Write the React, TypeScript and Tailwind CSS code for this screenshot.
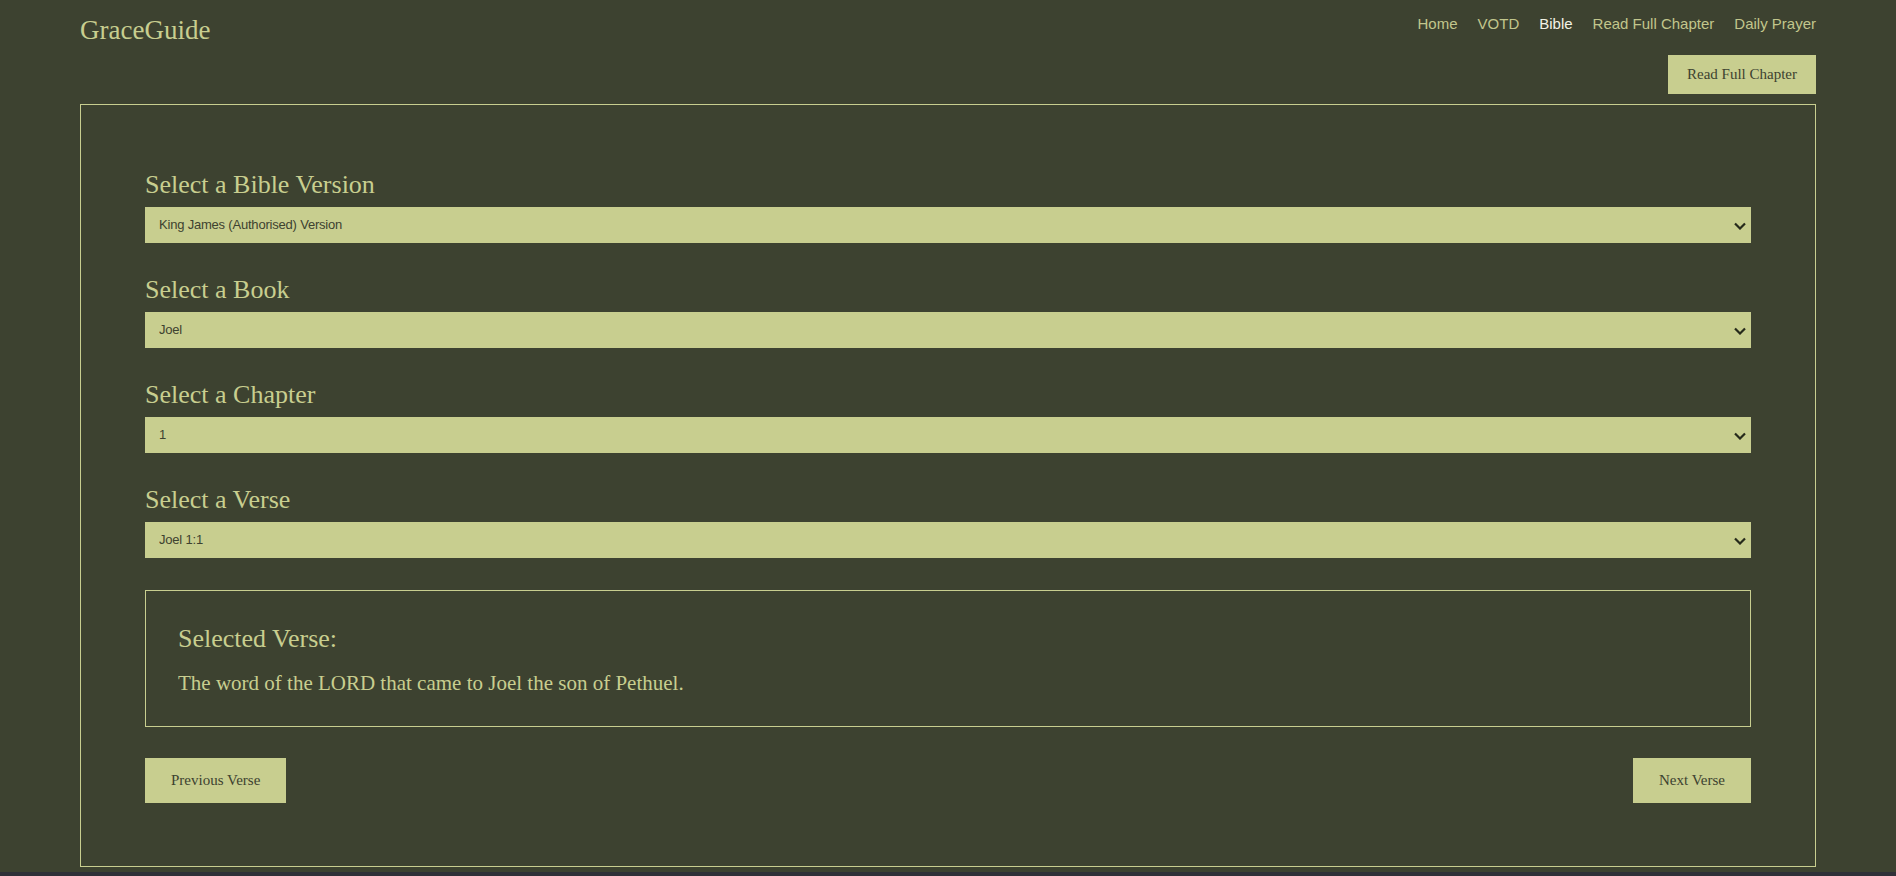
const serif = { fontFamily: '"Liberation Serif", "Times New Roman", serif' };
const sans = { fontFamily: '"Liberation Sans", Arial, sans-serif' };

const navLinks = ['Home', 'VOTD', 'Bible', 'Read Full Chapter', 'Daily Prayer'];

const fields = [
    { label: 'Select a Bible Version', value: 'King James (Authorised) Version' },
    { label: 'Select a Book', value: 'Joel' },
    { label: 'Select a Chapter', value: '1' },
    { label: 'Select a Verse', value: 'Joel 1:1' },
];

const Field = ({ label, value }: { label: string; value: string }) => {
    return (
        <div className="flex flex-col">
            <label className="text-[26px] leading-[30px] text-[#c8ce8f] mb-[7px]" style={serif}>
                {label}
            </label>
            <div className="relative">
                <select
                    className="w-full h-[36px] appearance-none bg-[#c8ce8f] text-[#3d4230] text-[13px] tracking-[-0.2px] pl-[14px] pr-10 outline-none rounded-none"
                    style={sans}
                    defaultValue={value}
                >
                    <option value={value}>{value}</option>
                </select>
                <svg
                    className="absolute right-[5px] top-[15px] pointer-events-none"
                    width="12"
                    height="8"
                    viewBox="0 0 12 8"
                    fill="none"
                >
                    <polyline points="1,1.5 6,6.5 11,1.5" stroke="#262a1b" strokeWidth="2.2" />
                </svg>
            </div>
        </div>
    );
};

export default function App() {
    return (
        <div className="w-full h-[876px] flex flex-col bg-[#3d4230]">
            <div className="flex-1 px-[80px]">
                <header className="flex justify-between items-start pt-[13px]">
                    <h1 className="text-[27px] leading-[30px] mt-[2px] text-[#c8ce8f]" style={serif}>
                        GraceGuide
                    </h1>
                    <nav className="flex gap-[20px] text-[15px] leading-[22px]" style={sans}>
                        {navLinks.map((link) => (
                            <a
                                key={link}
                                href="#"
                                className={link === 'Bible' ? 'text-[#f2f2e6]' : 'text-[#c2c68c]'}
                            >
                                {link}
                            </a>
                        ))}
                    </nav>
                </header>

                <div className="flex justify-end mt-[10px]">
                    <button
                        className="h-[39px] px-[19px] bg-[#c8ce8f] text-[#3d4230] text-[15px]"
                        style={serif}
                    >
                        Read Full Chapter
                    </button>
                </div>

                <main className="mt-[10px] border border-[#c8ce8f] px-[64px] pt-[65px] pb-[63px]">
                    <div className="flex flex-col gap-[32px]">
                        {fields.map((f) => (
                            <Field key={f.label} label={f.label} value={f.value} />
                        ))}
                    </div>

                    <div className="mt-[32px] border border-[#c8ce8f] px-[32px] pt-[33px] pb-[28px]">
                        <h2 className="text-[26px] leading-[30px] text-[#c8ce8f]" style={serif}>
                            Selected Verse:
                        </h2>
                        <p className="mt-[14px] text-[21px] leading-[30px] text-[#c8ce8f]" style={serif}>
                            The word of the LORD that came to Joel the son of Pethuel.
                        </p>
                    </div>

                    <div className="mt-[31px] flex justify-between">
                        <button
                            className="h-[45px] px-[26px] bg-[#c8ce8f] text-[#3d4230] text-[15px]"
                            style={serif}
                        >
                            Previous Verse
                        </button>
                        <button
                            className="h-[45px] px-[26px] bg-[#c8ce8f] text-[#3d4230] text-[15px]"
                            style={serif}
                        >
                            Next Verse
                        </button>
                    </div>
                </main>
            </div>
            <div className="h-[4px] bg-[#2f3038]"></div>
        </div>
    );
}
